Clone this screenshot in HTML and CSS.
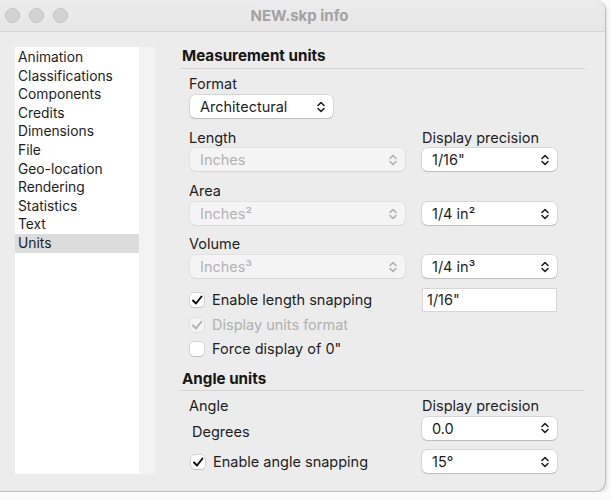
FILE: index.html
```html
<!DOCTYPE html>
<html>

<head>
    <title>NEW.skp info</title>
    <link rel="stylesheet" href="styles.css">
</head>

<body>
    <div class="window">
        <div class="titlebar">
            <div class="lights">
                <span class="light"></span>
                <span class="light"></span>
                <span class="light"></span>
            </div>
            <div class="title">NEW.skp info</div>
        </div>

        <div class="content">
            <div class="sidebar">
                <ul class="list">
                    <li>Animation</li>
                    <li>Classifications</li>
                    <li>Components</li>
                    <li>Credits</li>
                    <li>Dimensions</li>
                    <li>File</li>
                    <li>Geo-location</li>
                    <li>Rendering</li>
                    <li>Statistics</li>
                    <li>Text</li>
                    <li class="selected">Units</li>
                </ul>
                <div class="gutter"></div>
            </div>

            <div class="main">
                <h2 class="heading">Measurement units</h2>
                <div class="fields">
                    <div class="label first">Format</div>
                    <div class="popup format">Architectural<svg class="chev" viewBox="0 0 8 12"><path d="M1 4.5 L4 1.5 L7 4.5 M1 7.5 L4 10.5 L7 7.5"/></svg></div>

                    <div class="row gap10">
                        <div class="col label">Length</div>
                        <div class="label">Display precision</div>
                    </div>
                    <div class="row gap4">
                        <div class="col"><div class="popup wide disabled">Inches<svg class="chev" viewBox="0 0 8 12"><path d="M1 4.5 L4 1.5 L7 4.5 M1 7.5 L4 10.5 L7 7.5"/></svg></div></div>
                        <div class="popup narrow">1/16"<svg class="chev" viewBox="0 0 8 12"><path d="M1 4.5 L4 1.5 L7 4.5 M1 7.5 L4 10.5 L7 7.5"/></svg></div>
                    </div>

                    <div class="label gap10">Area</div>
                    <div class="row gap5">
                        <div class="col"><div class="popup wide disabled">Inches²<svg class="chev" viewBox="0 0 8 12"><path d="M1 4.5 L4 1.5 L7 4.5 M1 7.5 L4 10.5 L7 7.5"/></svg></div></div>
                        <div class="popup narrow">1/4 in²<svg class="chev" viewBox="0 0 8 12"><path d="M1 4.5 L4 1.5 L7 4.5 M1 7.5 L4 10.5 L7 7.5"/></svg></div>
                    </div>

                    <div class="label gap9">Volume</div>
                    <div class="row gap5">
                        <div class="col"><div class="popup wide disabled">Inches³<svg class="chev" viewBox="0 0 8 12"><path d="M1 4.5 L4 1.5 L7 4.5 M1 7.5 L4 10.5 L7 7.5"/></svg></div></div>
                        <div class="popup narrow">1/4 in³<svg class="chev" viewBox="0 0 8 12"><path d="M1 4.5 L4 1.5 L7 4.5 M1 7.5 L4 10.5 L7 7.5"/></svg></div>
                    </div>

                    <div class="row gap10">
                        <div class="col check"><span class="box on"><svg viewBox="0 0 14 14"><path d="M3 7.5 L6 10.5 L11.5 3.5"/></svg></span>Enable length snapping</div>
                        <div class="field">1/16"</div>
                    </div>
                    <div class="check dim gap5"><span class="box on"><svg viewBox="0 0 14 14"><path d="M3 7.5 L6 10.5 L11.5 3.5"/></svg></span>Display units format</div>
                    <div class="check gap8"><span class="box"></span>Force display of 0"</div>
                </div>

                <h2 class="heading angle">Angle units</h2>
                <div class="fields">
                    <div class="row first">
                        <div class="col label">Angle</div>
                        <div class="label">Display precision</div>
                    </div>
                    <div class="row gap4">
                        <div class="col plain">Degrees</div>
                        <div class="popup narrow">0.0<svg class="chev" viewBox="0 0 8 12"><path d="M1 4.5 L4 1.5 L7 4.5 M1 7.5 L4 10.5 L7 7.5"/></svg></div>
                    </div>
                    <div class="row gap10">
                        <div class="col check shift"><span class="box on"><svg viewBox="0 0 14 14"><path d="M3 7.5 L6 10.5 L11.5 3.5"/></svg></span>Enable angle snapping</div>
                        <div class="popup narrow">15°<svg class="chev" viewBox="0 0 8 12"><path d="M1 4.5 L4 1.5 L7 4.5 M1 7.5 L4 10.5 L7 7.5"/></svg></div>
                    </div>
                </div>
            </div>
        </div>
    </div>
</body>

</html>
```

FILE: styles.css
```css
body {
    margin: 0;
    background: #fbfbfb;
    font-family: Inter, "Liberation Sans", sans-serif;
    font-size: 14.5px;
    color: #1e1e1e;
}

.window {
    width: 606px;
    height: 492px;
    background: #ececec;
    border-right: 1px solid #bdbdbd;
    border-bottom: 1px solid #bdbdbd;
    border-radius: 0 10px 10px 0;
    box-shadow: 1px 2px 4px rgba(0, 0, 0, 0.12);
    box-sizing: border-box;
    overflow: hidden;
    display: flex;
    flex-direction: column;
}

.titlebar {
    height: 32px;
    flex: none;
    box-sizing: border-box;
    border-bottom: 1px solid #d2d2d2;
    background: linear-gradient(#ececec, #e6e6e6);
    display: flex;
    align-items: center;
}

.lights {
    display: flex;
    gap: 9px;
    padding-left: 5px;
}

.light {
    width: 13px;
    height: 13px;
    border-radius: 50%;
    background: #d3d3d3;
    border: 1px solid #c2c2c2;
}

.title {
    flex: 1;
    text-align: center;
    margin-right: 74px;
    font-weight: bold;
    font-size: 15px;
    color: #a2a2a2;
}

.content {
    flex: 1;
    display: flex;
}

.sidebar {
    display: flex;
    padding: 15px 0 17px 15px;
}

.list {
    list-style: none;
    margin: 0;
    padding: 1px 0 0;
    width: 124px;
    background: #fff;
    font-size: 13.8px;
}

.list li {
    height: 18.6px;
    line-height: 18.6px;
    padding-left: 3px;
}

.list li.selected {
    background: #dcdcdc;
}

.gutter {
    width: 16px;
    background: #f3f3f3;
}

.main {
    padding: 14px 0 0 25px;
    width: 405px;
}

.heading {
    margin: 0;
    font-size: 15.2px;
    line-height: 18px;
    font-weight: bold;
    color: #161616;
    padding: 1px 0 3px 2px;
    border-bottom: 1px solid #d3d3d3;
}

.heading.angle {
    margin-top: 12px;
    padding-bottom: 2px;
}

.fields {
    padding-left: 9px;
}

.label,
.plain,
.check {
    line-height: 16px;
}

.label {
    padding-top: 2px;
    margin-bottom: -2px;
}

.first {
    margin-top: 5px;
}

.gap4 { margin-top: 4px; }
.gap5 { margin-top: 5px; }
.gap8 { margin-top: 8px; }
.gap9 { margin-top: 9px; }
.gap10 { margin-top: 10px; }

.row {
    display: flex;
    align-items: center;
}

.row .label {
    align-self: flex-start;
}

.col {
    width: 233px;
    flex: none;
    box-sizing: border-box;
}

.plain {
    padding-left: 3px;
    padding-top: 8px;
}

.popup {
    height: 23px;
    box-sizing: border-box;
    background: #fff;
    border-radius: 5px;
    box-shadow: 0 0 0 0.5px rgba(0, 0, 0, 0.18), 0 1px 1px rgba(0, 0, 0, 0.12);
    display: flex;
    align-items: center;
    justify-content: space-between;
    padding: 0 8px 0 10px;
    margin-left: 1px;
}

.popup.format {
    width: 143px;
    margin-top: 5px;
}

.popup.wide {
    width: 215px;
}

.popup.narrow {
    width: 135px;
    margin-left: 0;
}

.popup.disabled {
    background: #f4f4f4;
    color: #b3b3b3;
    box-shadow: 0 0 0 0.5px rgba(0, 0, 0, 0.08), 0 1px 1px rgba(0, 0, 0, 0.05);
}

.chev {
    width: 8px;
    height: 12px;
    fill: none;
    stroke: #222;
    stroke-width: 1.6;
    stroke-linecap: round;
    stroke-linejoin: round;
}

.disabled .chev {
    stroke: #b0b0b0;
}

.field {
    width: 135px;
    height: 24px;
    box-sizing: border-box;
    background: #fff;
    border: 1px solid #d6d6d6;
    padding-left: 4px;
    line-height: 22px;
}

.check {
    display: flex;
    align-items: center;
    padding-left: 1px;
}

.check.shift {
    padding-left: 2px;
}

.box {
    width: 14px;
    height: 14px;
    box-sizing: border-box;
    border-radius: 4px;
    background: #fff;
    box-shadow: 0 0 0 0.5px rgba(0, 0, 0, 0.2), 0 1px 1px rgba(0, 0, 0, 0.1);
    margin-right: 8px;
    display: flex;
}

.box svg {
    width: 14px;
    height: 14px;
    fill: none;
    stroke: #111;
    stroke-width: 2;
    stroke-linecap: round;
    stroke-linejoin: round;
}

.dim {
    color: #b0b0b0;
}

.dim .box {
    background: #f4f4f4;
    box-shadow: 0 0 0 0.5px rgba(0, 0, 0, 0.1);
}

.dim .box svg {
    stroke: #b0b0b0;
}
```
